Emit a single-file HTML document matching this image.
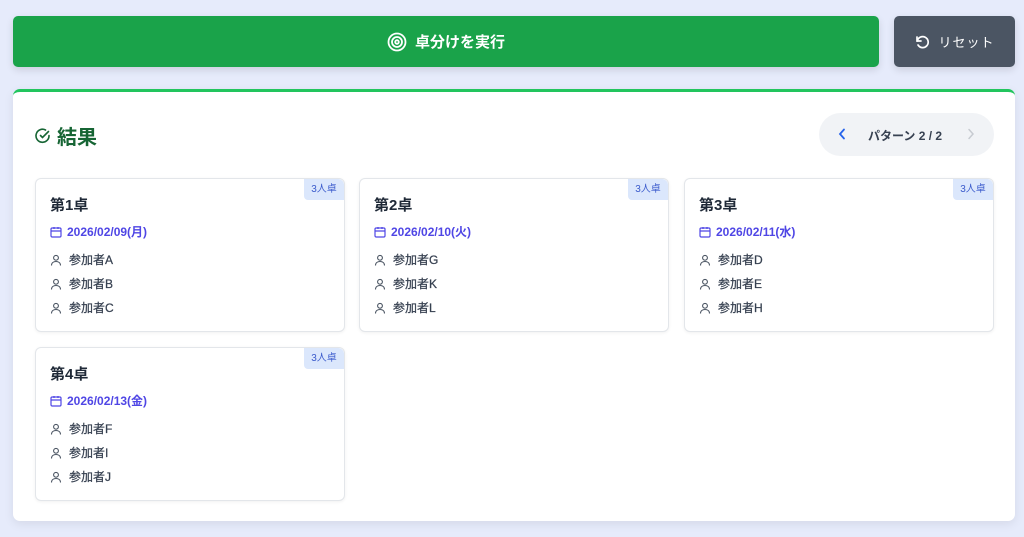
<!DOCTYPE html>
<html><head><meta charset="utf-8"><style>
*{box-sizing:border-box;margin:0;padding:0}
body{width:1024px;height:537px;background:#e6ebfb;font-family:"Liberation Sans","Noto Sans CJK JP",sans-serif;position:relative;overflow:hidden}
.run{position:absolute;left:13px;top:16px;width:866px;height:51px;background:#1aa34a;border-radius:5px;box-shadow:0 3px 8px rgba(0,0,0,.12);color:#fff;font-weight:bold;font-size:15px;display:flex;align-items:center;justify-content:center;gap:8px}
.reset{position:absolute;left:894px;top:16px;width:121px;height:51px;background:#4b5563;border-radius:5px;box-shadow:0 3px 8px rgba(0,0,0,.12);color:#fff;font-size:13px;display:flex;align-items:center;justify-content:center;gap:8px;letter-spacing:1px}
.panel{position:absolute;left:13px;top:89px;width:1002px;height:432px;background:#fff;border-top:3px solid #22c55e;border-radius:7px;box-shadow:0 3px 10px rgba(0,0,0,.08)}
.title{position:absolute;left:22px;top:29px;display:flex;align-items:center;gap:6px;color:#166534;font-size:20px;font-weight:bold}
.pager{position:absolute;left:806px;top:21px;width:175px;height:43px;background:#f1f3f6;border-radius:22px;font-size:12px;font-weight:bold;color:#374151}
.card{position:absolute;width:310px;height:154px;background:#fff;border:1px solid #e3e6ea;border-radius:6px;box-shadow:0 1px 3px rgba(0,0,0,.06)}
.badge{position:absolute;right:0;top:0;width:40px;height:21px;background:#dbe7fc;color:#3b5bcc;font-size:10px;text-align:center;line-height:21px;border-radius:0 6px 0 4px}
.ct{position:absolute;left:14px;top:15px;font-size:15px;font-weight:bold;color:#1f2937}
.dt{position:absolute;left:14px;top:44px;font-size:12px;font-weight:bold;color:#4f46e5;display:flex;align-items:center;gap:5px}
.p{position:absolute;left:14px;font-size:12px;color:#374151;display:flex;align-items:center;gap:7px;-webkit-text-stroke:0.25px #374151}
</style></head><body>
<div class="run"><svg width="20" height="20" viewBox="0 0 20 20" fill="none" stroke="#fff" stroke-width="1.8"><circle cx="10" cy="10" r="8.5"/><circle cx="10" cy="10" r="5"/><circle cx="10" cy="10" r="1.8"/></svg>卓分けを実行</div>
<div class="reset"><svg width="16" height="16" viewBox="0 0 16 16" fill="none" stroke="#fff" stroke-width="1.7" stroke-linecap="round"><path d="M3 3v4h4"/><path d="M3.3 7A5.5 5.5 0 1 1 4 11"/></svg>リセット</div>
<div class="panel">
<div class="title"><svg width="16" height="16" viewBox="0 0 16 16" fill="none" stroke="#166534" stroke-width="1.6" stroke-linecap="round"><path d="M14 7.5A6.5 6.5 0 1 1 10.5 2"/><path d="M5.5 7.5l2 2 6-6"/></svg>結果</div>
<div class="pager">
<svg style="position:absolute;left:19px;top:15px" width="8" height="12" viewBox="0 0 8 12" fill="none" stroke="#2563eb" stroke-width="1.8" stroke-linecap="round"><path d="M6 1.5L2 6l4 4.5"/></svg>
<span style="position:absolute;left:49px;top:14px">パターン 2 / 2</span>
<svg style="position:absolute;left:148px;top:15px" width="8" height="12" viewBox="0 0 8 12" fill="none" stroke="#c7cbd1" stroke-width="1.5" stroke-linecap="round"><path d="M2 1.5L6 6l-4 4.5"/></svg>
</div>
</div>
<svg width="0" height="0" style="position:absolute"><defs>
<symbol id="cal" viewBox="0 0 12 12"><rect x="1" y="2" width="10" height="9" rx="1.2" fill="none" stroke="#4f46e5" stroke-width="1.2"/><path d="M1 5h10M4 1v2M8 1v2" stroke="#4f46e5" stroke-width="1.2"/></symbol>
<symbol id="usr" viewBox="0 0 12 12"><circle cx="6" cy="3.8" r="2.4" fill="none" stroke="#4b5563" stroke-width="1.1"/><path d="M1.5 11.5c0-2.6 2-4 4.5-4s4.5 1.4 4.5 4" fill="none" stroke="#4b5563" stroke-width="1.1"/></symbol>
</defs></svg>

<div class="card" style="left:35px;top:178px"><div class="badge">3人卓</div><div class="ct">第1卓</div><div class="dt"><svg width="12" height="12"><use href="#cal"/></svg>2026/02/09(月)</div>
<div class="p" style="top:72px"><svg width="12" height="12"><use href="#usr"/></svg>参加者A</div><div class="p" style="top:96px"><svg width="12" height="12"><use href="#usr"/></svg>参加者B</div><div class="p" style="top:120px"><svg width="12" height="12"><use href="#usr"/></svg>参加者C</div></div>

<div class="card" style="left:359px;top:178px"><div class="badge">3人卓</div><div class="ct">第2卓</div><div class="dt"><svg width="12" height="12"><use href="#cal"/></svg>2026/02/10(火)</div>
<div class="p" style="top:72px"><svg width="12" height="12"><use href="#usr"/></svg>参加者G</div><div class="p" style="top:96px"><svg width="12" height="12"><use href="#usr"/></svg>参加者K</div><div class="p" style="top:120px"><svg width="12" height="12"><use href="#usr"/></svg>参加者L</div></div>

<div class="card" style="left:684px;top:178px"><div class="badge">3人卓</div><div class="ct">第3卓</div><div class="dt"><svg width="12" height="12"><use href="#cal"/></svg>2026/02/11(水)</div>
<div class="p" style="top:72px"><svg width="12" height="12"><use href="#usr"/></svg>参加者D</div><div class="p" style="top:96px"><svg width="12" height="12"><use href="#usr"/></svg>参加者E</div><div class="p" style="top:120px"><svg width="12" height="12"><use href="#usr"/></svg>参加者H</div></div>

<div class="card" style="left:35px;top:347px"><div class="badge">3人卓</div><div class="ct">第4卓</div><div class="dt"><svg width="12" height="12"><use href="#cal"/></svg>2026/02/13(金)</div>
<div class="p" style="top:72px"><svg width="12" height="12"><use href="#usr"/></svg>参加者F</div><div class="p" style="top:96px"><svg width="12" height="12"><use href="#usr"/></svg>参加者I</div><div class="p" style="top:120px"><svg width="12" height="12"><use href="#usr"/></svg>参加者J</div></div>
</body></html>
